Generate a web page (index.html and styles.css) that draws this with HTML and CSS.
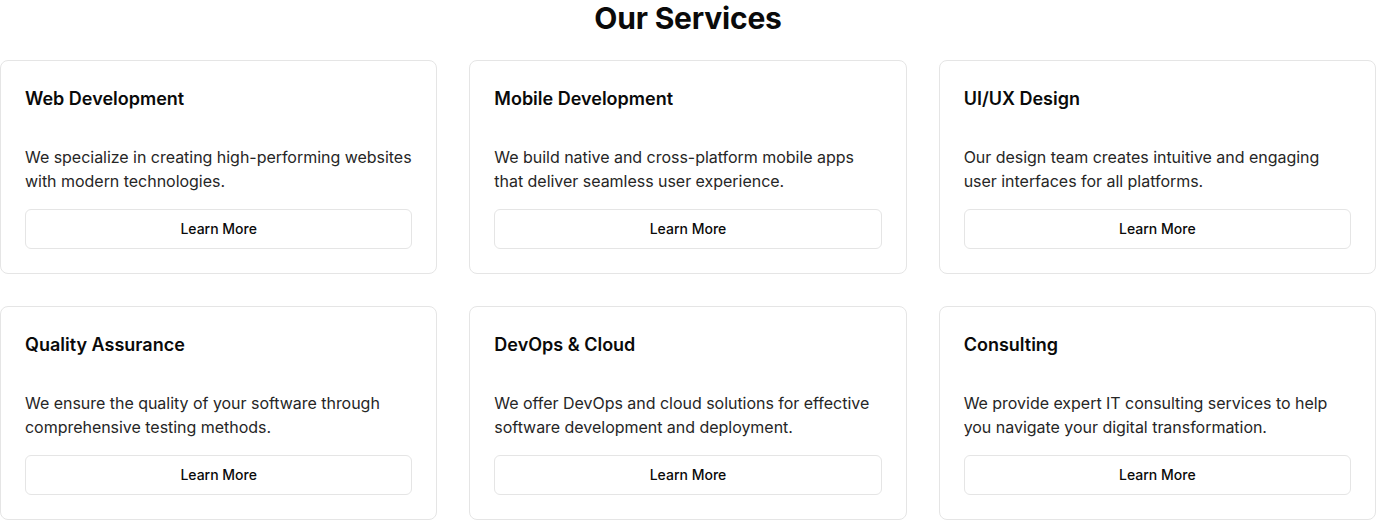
FILE: index.html
```html
<!DOCTYPE html>
<html lang="en">
<head>
<meta charset="utf-8">
<title>Our Services</title>
<link rel="stylesheet" href="styles.css">
</head>
<body>
<section class="services">
  <h2 class="services-title">Our Services</h2>
  <div class="grid">
    <div class="card">
      <h3 class="card-title">Web Development</h3>
      <p class="card-desc">We specialize in creating high-performing websites with modern technologies.</p>
      <button class="btn">Learn More</button>
    </div>
    <div class="card">
      <h3 class="card-title">Mobile Development</h3>
      <p class="card-desc">We build native and cross-platform mobile apps that deliver seamless user experience.</p>
      <button class="btn">Learn More</button>
    </div>
    <div class="card">
      <h3 class="card-title">UI/UX Design</h3>
      <p class="card-desc">Our design team creates intuitive and engaging user interfaces for all platforms.</p>
      <button class="btn">Learn More</button>
    </div>
    <div class="card">
      <h3 class="card-title">Quality Assurance</h3>
      <p class="card-desc">We ensure the quality of your software through comprehensive testing methods.</p>
      <button class="btn">Learn More</button>
    </div>
    <div class="card">
      <h3 class="card-title">DevOps &amp; Cloud</h3>
      <p class="card-desc">We offer DevOps and cloud solutions for effective software development and deployment.</p>
      <button class="btn">Learn More</button>
    </div>
    <div class="card">
      <h3 class="card-title">Consulting</h3>
      <p class="card-desc">We provide expert IT consulting services to help you navigate your digital transformation.</p>
      <button class="btn">Learn More</button>
    </div>
  </div>
</section>
</body>
</html>
```
FILE: styles.css
```css
* { box-sizing: border-box; }
html, body {
  margin: 0;
  padding: 0;
  background: #ffffff;
  font-family: Inter, "Noto Sans", "Liberation Sans", sans-serif;
  color: #0a0a0a;
}
.services-title {
  margin: 0 0 24px;
  font-size: 30px;
  line-height: 36px;
  font-weight: 700;
  text-align: center;
  letter-spacing: -0.2px;
}
.grid {
  display: grid;
  grid-template-columns: repeat(3, 1fr);
  gap: 32px;
}
.card {
  border: 1px solid #e5e5e5;
  border-radius: 8px;
  padding: 24px;
  display: flex;
  flex-direction: column;
  background: #fff;
}
.card-title {
  margin: 0 0 32px;
  font-size: 18px;
  line-height: 28px;
  font-weight: 600;
}
.card-desc {
  margin: 0 0 16px;
  font-size: 16px;
  line-height: 24px;
  color: #262626;
  letter-spacing: -0.03px;
}
.btn {
  height: 40px;
  width: 100%;
  border: 1px solid #e5e5e5;
  border-radius: 6px;
  background: #fff;
  font-family: inherit;
  font-size: 14px;
  line-height: 20px;
  padding: 0 0 1px;
  font-weight: 500;
  color: #0a0a0a;
}
```
